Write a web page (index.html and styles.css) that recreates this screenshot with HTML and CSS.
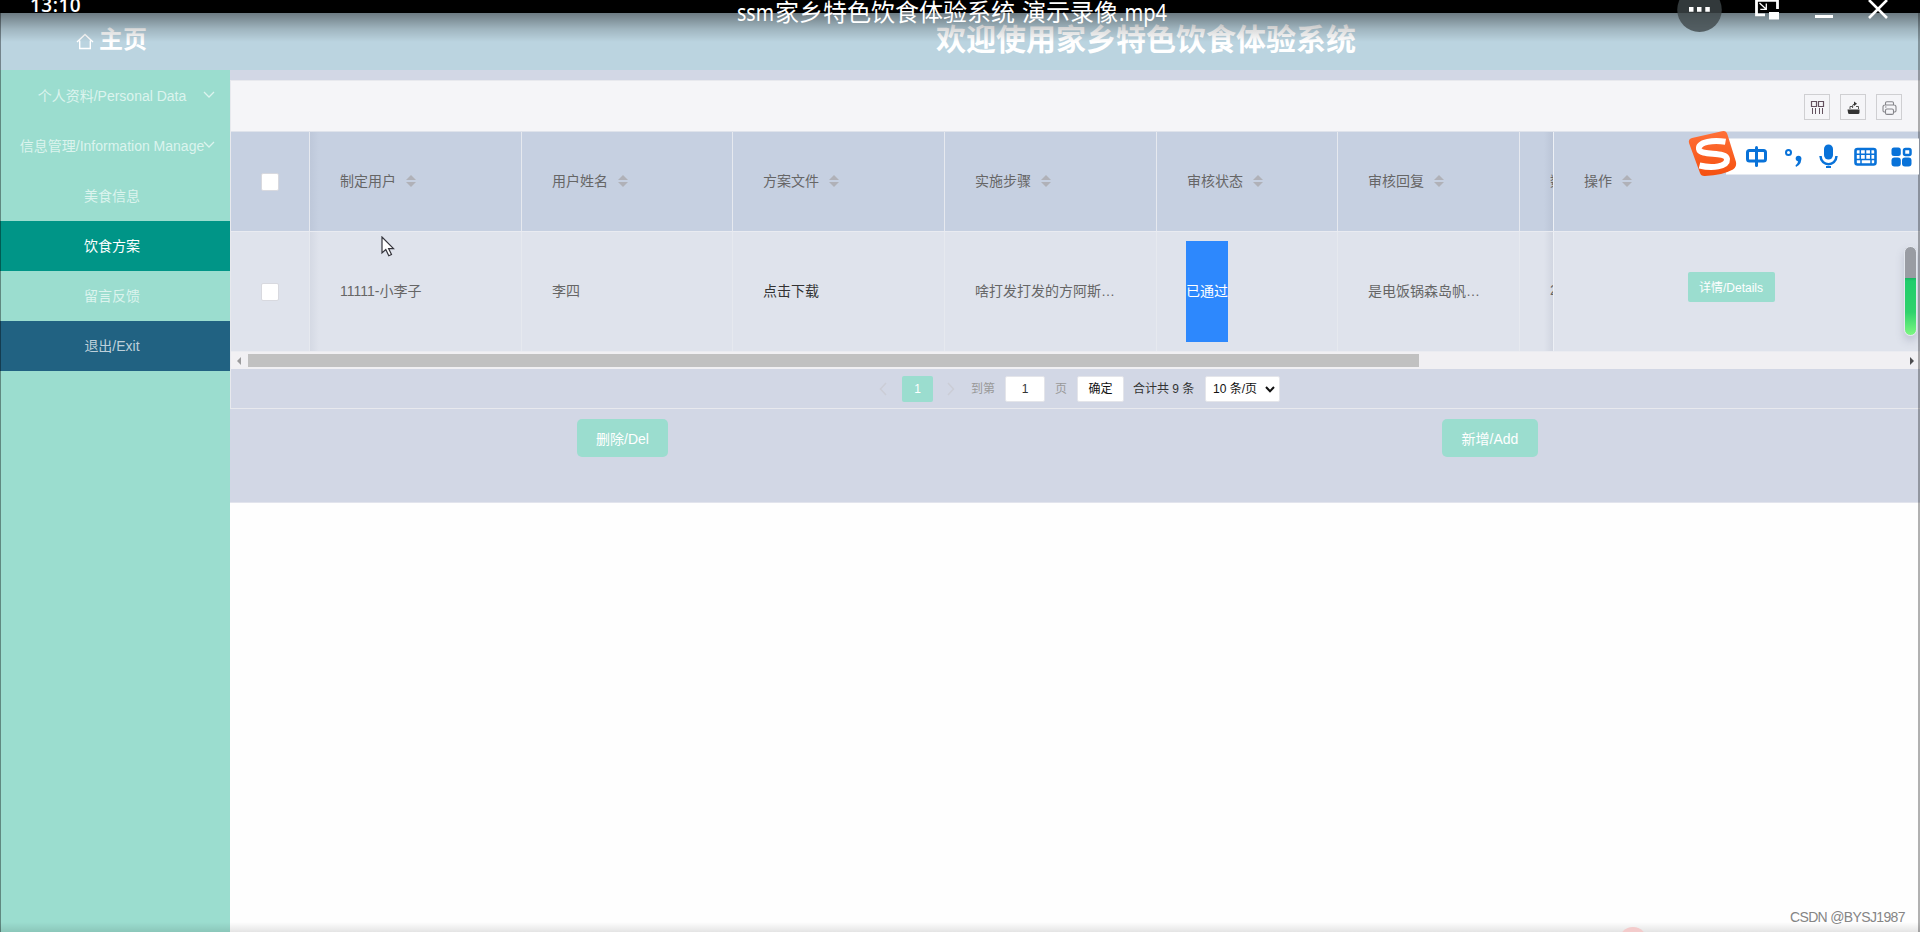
FILE: index.html
```html
<!DOCTYPE html>
<html lang="zh-CN">
<head>
<meta charset="utf-8">
<title>家乡特色饮食体验系统</title>
<link rel="stylesheet" href="styles.css">
</head>
<body>
<div class="screen">
  <header class="topbar">
    <div class="home">
      <svg class="home-icon" width="18" height="17" viewBox="0 0 18 17"><path d="M1 9 9 1.4 17 9M3.7 7.5V15.5H14.3V7.5" fill="none" stroke="#fff" stroke-width="1.4"/></svg>
      <span>主页</span>
    </div>
    <h1 class="site-title">欢迎使用家乡特色饮食体验系统</h1>
  </header>
  <div class="body">
    <nav class="menu">
      <a class="item">个人资料/Personal Data<svg class="chev" width="12" height="8" viewBox="0 0 12 8"><path d="M1 1 6 6 11 1"/></svg></a>
      <a class="item">信息管理/Information Manage<svg class="chev" width="12" height="8" viewBox="0 0 12 8"><path d="M1 1 6 6 11 1"/></svg></a>
      <a class="item sub">美食信息</a>
      <a class="item sub active">饮食方案</a>
      <a class="item sub">留言反馈</a>
      <a class="item exit">退出/Exit</a>
    </nav>
    <main class="content">
      <section class="panel">
        <div class="grid-view">
          <div class="toolbar">
            <span class="tool"><svg width="16" height="16" viewBox="0 0 16 16" fill="none" stroke="#64515f"><path d="M1.500 1.500H6.500V6.500H1.500ZM8.500 1.500H13.500V6.500H8.500Z" stroke-width="1.200"/><path d="M2.500 8V14M5.500 8V14M9.500 8V14M12.500 8V14" stroke-width="1"/></svg></span>
            <span class="tool"><svg width="16" height="16" viewBox="0 0 16 16"><path d="M1.500 9.500H13.500V12.500Q13.500 14 12 14H3.500Q2 14 2 12.500Z" fill="#333"/><path d="M4 9V6.500H7M10 6.500H12.500V9M6.500 8Q6 4 9 3.500" fill="none" stroke="#555"/><path d="M8 1.500 11 3.700 8 6Z" fill="#333"/></svg></span>
            <span class="tool"><svg width="16" height="16" viewBox="0 0 16 16" fill="none" stroke="#85858a" stroke-width="1.100"><path d="M3.500 5V3Q3.500 1.700 4.800 1.700H10.200Q11.500 1.700 11.500 3V5M3.500 12H2.300Q1 12 1 10.500V7Q1 5 3 5H12Q14 5 14 7V10.500Q14 12 12.700 12H11.500M5 9H10Q11.500 9 11.500 10.500V13Q11.500 14.400 10 14.400H5Q3.500 14.400 3.500 13V10.500Q3.500 9 5 9ZM3 7H4.500"/></svg></span>
          </div>
          <div class="table">
            <div class="row head">
              <div class="cell check"><i class="box"></i></div>
              <div class="cell shade">制定用户<i class="sort"></i></div>
              <div class="cell">用户姓名<i class="sort"></i></div>
              <div class="cell">方案文件<i class="sort"></i></div>
              <div class="cell">实施步骤<i class="sort"></i></div>
              <div class="cell">审核状态<i class="sort"></i></div>
              <div class="cell">审核回复<i class="sort"></i></div>
              <div class="cell cut">数</div>
              <div class="cell last">操作<i class="sort"></i></div>
            </div>
            <div class="row data">
              <div class="cell check"><i class="box"></i></div>
              <div class="cell shade">11111-小李子</div>
              <div class="cell">李四</div>
              <div class="cell link">点击下载</div>
              <div class="cell">啥打发打发的方阿斯…</div>
              <div class="cell status"><span class="passed">已通过</span></div>
              <div class="cell">是电饭锅森岛帆…</div>
              <div class="cell cut">2</div>
              <div class="cell last ops"><button class="details">详情/Details</button></div>
            </div>
          </div>
          <div class="hscroll"><i class="arrow left"></i><i class="thumb"></i><i class="arrow right"></i></div>
          <div class="pager">
            <svg class="pg prev" width="8" height="14" viewBox="0 0 8 14"><path d="M7 1 1.500 7 7 13"/></svg>
            <span class="current">1</span>
            <svg class="pg next" width="8" height="14" viewBox="0 0 8 14"><path d="M1 1 6.500 7 1 13"/></svg>
            <span class="dim goto">到第</span>
            <span class="field">1</span>
            <span class="dim unit">页</span>
            <span class="confirm">确定</span>
            <span class="total">合计共 9 条</span>
            <span class="select">10 条/页<svg width="10" height="7" viewBox="0 0 10 7"><path d="M1 1 5 5.300 9 1" fill="none" stroke="#111" stroke-width="2"/></svg></span>
          </div>
        </div>
        <div class="actions">
          <button class="btn del">删除/Del</button>
          <button class="btn add">新增/Add</button>
        </div>
      </section>
    </main>
  </div>

  <div class="player">
    <div class="fade-top"></div>
    <div class="fade-bottom"></div>
    <div class="edge-left"></div>
    <div class="edge-right"></div>
    <div class="clock">13:10</div>
    <svg class="video-title" width="440" height="32" viewBox="0 0 440 32"><text x="2" y="21" textLength="37" lengthAdjust="spacingAndGlyphs">ssm</text><text x="40" y="21" textLength="240" lengthAdjust="spacingAndGlyphs">家乡特色饮食体验系统</text><text x="287" y="21" textLength="96" lengthAdjust="spacingAndGlyphs">演示录像</text><text x="384" y="21" textLength="48" lengthAdjust="spacingAndGlyphs">.mp4</text></svg>
    <svg class="controls" width="260" height="34" viewBox="0 0 260 34">
      <circle cx="39.500" cy="9.700" r="22.300" fill="#3f474a" fill-opacity=".8"/>
      <path d="M29 7h4.500v4.700H29zM37 7h4.500v4.700H37zM45.300 7h4.500v4.700h-4.500z" fill="#fff"/>
      <path d="M105 14.800H96.500V.300H117.500V9" fill="none" stroke="#fff" stroke-width="2.800"/>
      <path d="M99.500 3 106 9M106.300 3.500V9.300H100.300" fill="none" stroke="#fff" stroke-width="1.300"/>
      <path d="M109 12h10v7.500h-10z" fill="#fff"/>
      <path d="M155 15h18v3h-18z" fill="#fff"/>
      <path d="M209 0 227 18M227 0 209 18" stroke="#fff" stroke-width="2.600"/>
    </svg>
  </div>

  <div class="ime">
    <svg width="234" height="50" viewBox="0 0 234 50">
      <defs><linearGradient id="flame" x1="0" y1="0" x2="0" y2="1"><stop offset="0" stop-color="#ff7038"/><stop offset="1" stop-color="#f5500f"/></linearGradient></defs>
      <path d="M38 9.500H231V45.500H38Z" fill="#fff"/>
      <path d="M4 9 34 2.300Q38 1.300 39.300 5L48 33Q49 38 45 40.500Q35 46 17 47Q13 47.300 12 44L1 14Q0 10 4 9Z" fill="url(#flame)"/>
      <path d="M37.500 12.800C26 10.800 10 12.500 11 20C12.200 27.500 38.500 22 39 30C39.500 38 24 39.500 11.500 36.500" fill="none" stroke="#fff" stroke-width="6"/>
      <g fill="none" stroke="#0872d9">
        <rect x="59.500" y="21.500" width="18" height="10.500" rx="2" stroke-width="3"/><path d="M68.500 18.500V36.500" stroke-width="3" stroke-linecap="round"/>
        <circle cx="100.500" cy="23.500" r="2.500" stroke-width="2"/>
        <path d="M132.500 27C133 38 148 38 148.500 27" stroke-width="2.500"/><path d="M138 38H143" stroke-width="2"/>
        <rect x="167.500" y="20" width="20" height="15.500" rx="2" stroke-width="2.600"/>
        <path d="M168 25.300H187M168 30.500H187M172.300 20V30.500M177.500 20V30.500M182.700 20V30.500M173 31V35M183 31V35" stroke-width="1.500"/>
        <rect x="216" y="20" width="6.500" height="6" rx="1.500" stroke-width="2.500"/>
      </g>
      <g fill="#0872d9"><circle cx="110.500" cy="29.500" r="2.800"/><path d="M113 28Q114.500 35 108 38L107.500 36.300Q111 34 109.500 30Z"/><rect x="136" y="15.500" width="9" height="15" rx="4.500"/><rect x="203.500" y="18.500" width="9.300" height="8.500" rx="2.500"/><rect x="203.500" y="28.500" width="9.300" height="9" rx="3"/><rect x="214" y="28.500" width="9.500" height="9" rx="3"/></g>
    </svg>
  </div>
  <div class="level"></div>
  <div class="pink-dot"></div>
  <svg class="cursor" width="15" height="21" viewBox="0 0 15 21"><path d="M1 1V17L4.800 13.600 7.800 19.800 10.500 18.500 7.600 12.600H12.500Z" fill="#fff" stroke="#34343c" stroke-width="1.200"/></svg>
  <div class="watermark">CSDN @BYSJ1987</div>
</div>
</body>
</html>
```
FILE: styles.css
```css
* { box-sizing: border-box; }
body { margin: 0; background: #000; font-family: "Liberation Sans", "Noto Sans CJK SC", sans-serif; font-size: 14px; color: #666; }
button { font-family: inherit; border: 0; padding: 0; color: #fff; background: #9bddcf; }
.screen { position: relative; width: 1920px; height: 932px; padding-top: 13px; overflow: hidden; display: flex; flex-direction: column; }
.topbar { height: 57px; flex: none; display: flex; align-items: center; padding-bottom: 4px; background: #bbd4e0; color: #fff; }
.home { display: flex; flex: none; align-items: center; gap: 5px; width: 936px; padding-left: 76px; font-size: 24px; font-weight: bold; line-height: 30px; }
.home-icon { margin-top: 3px; }
.site-title { margin: 0; font-size: 30px; line-height: 40px; font-weight: bold; white-space: nowrap; }
.body { flex: 1; display: flex; min-height: 0; }
.menu { width: 230px; flex: none; background: #9bddcf; padding-top: 1px; }
.item { position: relative; display: flex; align-items: center; justify-content: center; height: 50px; padding: 0 6px 3px 0; white-space: nowrap; color: #dcf4ee; }
.active { background: #009587; color: #fff; }
.exit { background: #216282; color: #bed0da; }
.chev { position: absolute; left: 203px; top: 20px; fill: none; stroke: #dcf4ee; stroke-width: 1.3; }
.content { flex: 1; min-width: 0; background: #fefefe; }
.panel { height: 433px; background: #d2d7e5; padding-top: 10px; border-bottom: 1px solid #e2e4ed; }
.grid-view { height: 329px; border: 1px solid #e8e9ee; border-right: 0; }
.toolbar { height: 50px; background: #f5f5f8; display: flex; justify-content: flex-end; align-items: center; gap: 10px; padding: 2px 18px 0 0; }
.tool { width: 26px; height: 26px; border: 1px solid #cfcfd2; display: flex; align-items: center; justify-content: center; padding-top: 2px; padding-left: 2px; }
.row { display: grid; grid-template-columns: 79px 212px 211px 212px 212px 181px 182px 33px 1fr; }
.head { height: 101px; background: #c6d0e1; border-top: 1px solid #dfe3eb; border-bottom: 1px solid #e9ebf1; }
.data { height: 120px; background: #dfe3ec; border-bottom: 1px solid #ebecf1; }
.cell { display: flex; align-items: center; padding: 0 0 3px 30px; border-right: 1px solid #e6e9ef; white-space: nowrap; overflow: hidden; }
.check { padding: 0; justify-content: center; }
.box { width: 18px; height: 18px; background: #fff; border: 1px solid #d8d9df; border-radius: 2px; }
.shade { background: linear-gradient(90deg, rgba(120, 130, 155, .1), transparent 9px); }
.cut { border-right: 0; background: linear-gradient(270deg, rgba(110, 120, 145, .12), transparent 9px); }
.last { border-left: 1px solid #edf0f5; border-right: 0; }
.sort { display: flex; flex-direction: column; gap: 2px; margin: 2px 0 0 10px; }
.sort::before, .sort::after { content: ""; border: 5px solid transparent; }
.sort::before { border-top: 0; border-bottom-color: #b0b1b8; }
.sort::after { border-bottom: 0; border-top-color: #b0b1b8; }
.link { color: #333; }
.status { padding-bottom: 0; padding-left: 29px; }
.passed { width: 42px; height: 101px; line-height: 101px; background: #2d88fd; color: #fff; }
.ops { padding: 0 12px 10px 0; justify-content: center; }
.details { width: 87px; height: 30px; border-radius: 2px; font-size: 12px; }
.hscroll { height: 17px; background: #f1f0f3; display: flex; align-items: center; padding: 0 6px 0 6px; }
.thumb { width: 1171px; height: 13px; background: #c1c1c1; margin-left: 7px; }
.arrow { width: 0; height: 0; border: 4px solid transparent; }
.left { border-left: 0; border-right-color: #9b9b9d; }
.right { border-right: 0; border-left-color: #4d4d4f; margin-left: auto; }
.pager { height: 39px; display: flex; align-items: center; padding: 1px 0 0 648px; font-size: 12px; line-height: 26px; white-space: nowrap; color: #333; }
.pg { fill: none; stroke: #cbcdd6; stroke-width: 1.5; }
.current { width: 31px; height: 26px; margin: 0 14px 0 15px; text-align: center; border-radius: 2px; background: #9bddcf; color: #fff; }
.dim { color: #999; }
.goto { margin-left: 16px; }
.field, .confirm, .select { height: 26px; background: #fff; border: 1px solid #e4e5ea; border-radius: 2px; line-height: 25px; text-align: center; }
.field { width: 40px; margin: 0 10px; }
.confirm { width: 47px; margin: 0 9px 0 10px; color: #111; }
.total { width: 63px; }
.select { width: 75px; margin-left: 9px; display: flex; align-items: center; justify-content: space-between; padding: 0 4px 0 7px; color: #111; }
.actions { display: flex; padding: 10px 0 0 347px; }
.btn { height: 38px; border-radius: 5px; font-size: 14px; }
.del { width: 91px; }
.add { width: 96px; margin-left: 774px; }

.player { position: absolute; inset: 0; }
.fade-top { position: absolute; inset: 13px 0 auto; height: 29px; background: linear-gradient(rgba(0, 0, 0, .42), rgba(0, 0, 0, .15) 55%, transparent); }
.fade-bottom { position: absolute; inset: auto 0 0; height: 10px; background: linear-gradient(transparent, rgba(0, 0, 0, .1)); }
.edge-left { position: absolute; left: 0; top: 13px; bottom: 0; width: 1px; background: rgba(0, 0, 0, .38); }
.edge-right { position: absolute; right: 0; top: 13px; bottom: 0; width: 2px; background: rgba(0, 0, 0, .3); }
.clock { position: absolute; left: 30px; top: -7px; font: 600 19px/24px "Open Sans", sans-serif; letter-spacing: .5px; color: #fff; }
.video-title { position: absolute; left: 735px; top: 0; font: 24px "Noto Sans", "Noto Sans CJK SC", sans-serif; fill: #fff; }
.controls { position: absolute; left: 1660px; top: 0; }
.ime { position: absolute; left: 1688px; top: 129px; }
.level { position: absolute; left: 1904px; top: 246px; width: 13px; height: 90px; border: 1px solid #e3e7ee; border-radius: 7px; background: linear-gradient(#999ca3 31px, #18b563 31px, #20cd6c 34px, #2fd26c 65px, #7cf781); box-shadow: 0 5px 9px rgba(90, 100, 130, .25); }
.pink-dot { position: absolute; left: 1619px; top: 927px; width: 28px; height: 28px; border-radius: 50%; background: #f3cbcb; }
.cursor { position: absolute; left: 381px; top: 236px; }
.watermark { position: absolute; left: 1790px; top: 908px; font-size: 14px; line-height: 18px; letter-spacing: -.65px; color: #858585; white-space: nowrap; }
```
